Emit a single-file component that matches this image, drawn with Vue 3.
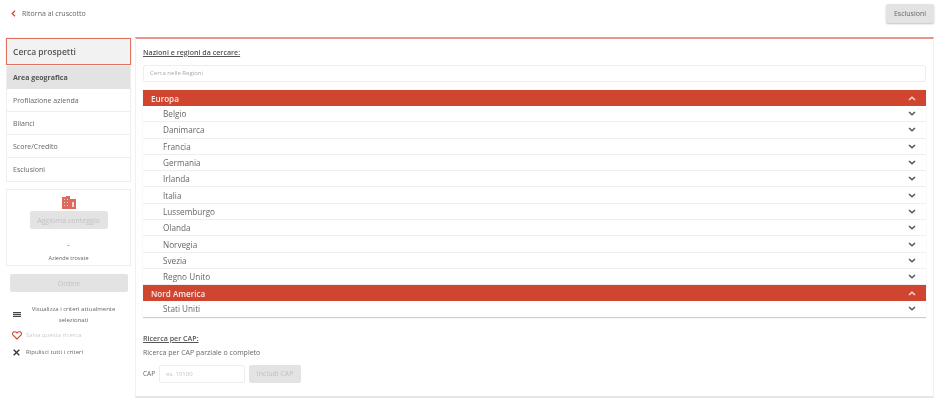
<script setup>
const menu = ['Area geografica', 'Profilazione azienda', 'Bilanci', 'Score/Credito', 'Esclusioni']
const groups = [
  { name: 'Europa', items: ['Belgio', 'Danimarca', 'Francia', 'Germania', 'Irlanda', 'Italia', 'Lussemburgo', 'Olanda', 'Norvegia', 'Svezia', 'Regno Unito'] },
  { name: 'Nord America', items: ['Stati Uniti'] }
]
</script>

<template>
  <div class="page">
    <header class="top">
      <a class="back"><svg width="5" height="7" viewBox="0 0 5 7"><path d="M4 .8 1.2 3.5 4 6.2" fill="none" stroke="#d0452f" stroke-width="1.2"/></svg><span>Ritorna al cruscotto</span></a>
      <button class="excl">Esclusioni</button>
    </header>
    <div class="cols">
      <aside class="side">
        <div class="side-title">Cerca prospetti</div>
        <ul class="menu">
          <li v-for="(m, i) in menu" :key="m" :class="{ active: i === 0 }">{{ m }}</li>
        </ul>
        <div class="count">
          <svg class="bld" width="14" height="13" viewBox="0 0 14 13"><path d="M0 1h4V0h4v3h6v10H0z" fill="#dd6a5c"/><path d="M2 3h1v1H2zM5 3h1v1H5zM2 6h1v1H2zM5 6h1v1H5zM2 9h1v1H2zM5 9h1v1H5zM10 6h2v5h-2z" fill="#f6d5d0"/></svg>
          <button class="ghost upd">Aggiorna conteggio</button>
          <div class="dash">-</div>
          <div class="found">Aziende trovate</div>
        </div>
        <button class="ghost order">Ordine</button>
        <div class="act view">
          <svg width="8" height="5" viewBox="0 0 8 5"><path d="M0 0h8v1.200H0zM0 1.900h8v1.200H0zM0 3.800h8V5H0z" fill="#444"/></svg>
          <span>Visualizza i criteri attualmente selezionati</span>
        </div>
        <div class="act saved">
          <svg width="10" height="9" viewBox="0 0 10 9"><path d="M5 8 1.100 4.200C-.2 2.700.8.8 2.600.8 3.600.8 4.500 1.300 5 2c.5-.7 1.400-1.200 2.400-1.200 1.800 0 2.800 1.900 1.500 3.400z" fill="none" stroke="#d0452f" stroke-width="1.100"/></svg>
          <span>Salva questa ricerca</span>
        </div>
        <div class="act clear">
          <svg width="7" height="7" viewBox="0 0 7 7"><path d="M.7.7l5.600 5.600M6.300.7.700 6.300" stroke="#333" stroke-width="1.300"/></svg>
          <span>Ripulisci tutti i criteri</span>
        </div>
      </aside>
      <main class="panel">
        <h2 class="head">Nazioni e regioni da cercare:</h2>
        <div class="search">Cerca nelle Regioni</div>
        <div class="list">
          <template v-for="g in groups" :key="g.name">
            <div class="grp">
              <span>{{ g.name }}</span>
              <svg width="8" height="5" viewBox="0 0 8 5"><path d="M1 4l3-2.700L7 4" fill="none" stroke="#f8d9d3" stroke-width="1.500"/></svg>
            </div>
            <div v-for="c in g.items" :key="c" class="row">
              <span>{{ c }}</span>
              <svg width="8" height="5" viewBox="0 0 8 5"><path d="M1 1l3 2.700L7 1" fill="none" stroke="#555" stroke-width="1.500"/></svg>
            </div>
          </template>
        </div>
        <h2 class="head cap">Ricerca per CAP:</h2>
        <p class="hint">Ricerca per CAP parziale o completo</p>
        <div class="capline">
          <label>CAP</label>
          <div class="capin">es. 10100</div>
          <button class="ghost inc">Includi CAP</button>
        </div>
      </main>
    </div>
  </div>
</template>

<style scoped>
.page { width: 940px; height: 403px; overflow: hidden; background: #fff; font-family: "Open Sans", sans-serif; color: #555; filter: blur(0.75px); box-sizing: border-box; padding: 4px 6px 0; }
.top { display: flex; justify-content: space-between; align-items: flex-start; height: 34px; }
.back { display: flex; align-items: center; gap: 6px; font-size: 7px; padding: 4px 0 0 5px; height: 10px; color: #666; }
.excl { width: 48px; height: 19px; padding: 0; border: 0; border-radius: 2px; background: #e3e3e3; box-shadow: 0 1px 2px rgba(0,0,0,.25); font: 7px "Open Sans", sans-serif; color: #666; }
.cols { display: flex; gap: 4px; align-items: flex-start; }
.side { width: 125px; flex: none; }
.side-title { height: 27px; margin-bottom: 1px; box-sizing: border-box; border: 1px solid #e0705f; background: #f2f2f2; box-shadow: 0 0 1px rgba(208,69,47,.5); font-size: 8.500px; font-weight: 600; line-height: 25px; padding-left: 6px; color: #555; }
.menu { list-style: none; margin: 0; padding: 0; border: 1px solid #eee; border-top: 0; font-size: 7px; color: #666; }
.menu li { height: 23px; line-height: 21px; padding: 1px 0 0 6px; border-bottom: 1px solid #eee; box-sizing: border-box; }
.menu li:last-child { border-bottom: 0; }
.menu .active { background: #e3e3e3; font-weight: 700; color: #555; border-bottom: 0; }
.count { margin-top: 7px; height: 77px; box-sizing: border-box; border: 1px solid #eee; display: flex; flex-direction: column; align-items: center; padding-top: 6px; }
.ghost { border: 0; padding: 0; border-radius: 2px; background: #e3e3e3; color: #c2c2c2; font-family: "Open Sans", sans-serif; }
.upd { width: 78px; height: 18px; font-size: 7px; margin-top: 2px; }
.dash { margin-top: 9px; font-size: 8px; line-height: 11px; color: #666; }
.found { margin-top: 5px; font-size: 5.500px; line-height: 8px; color: #666; }
.order { display: block; width: 118px; height: 18px; margin: 8px 0 0 4px; font-size: 7px; }
.act { display: flex; align-items: center; font-size: 6px; color: #666; }
.view { margin-top: 12px; padding-left: 7px; gap: 5px; }
.view span { width: 95px; text-align: center; line-height: 10.500px; }
.saved { margin-top: 5px; padding-left: 6px; gap: 4px; color: #ccc; height: 10px; }
.clear { margin-top: 7px; padding-left: 7px; gap: 6px; height: 10px; }
.panel { flex: 1; margin-top: -1px; height: 361px; box-sizing: border-box; border-top: 2px solid #ec9488; border-left: 1px solid #f1f1f1; border-right: 1px solid #f1f1f1; border-bottom: 2px solid #e6e6e6; padding: 0 7px; }
.head { margin: 0; font-size: 7.100px; line-height: 10px; font-weight: 600; text-decoration: underline; color: #555; padding-top: 8px; }
.search { margin-top: 8px; height: 17px; box-sizing: border-box; border: 1px solid #eee; border-radius: 2px; font-size: 6px; line-height: 15px; padding-left: 6px; color: #aaa; }
.list { margin-top: 8px; border-bottom: 1px solid #ccc; box-shadow: 0 0 1px rgba(0,0,0,.15); }
.grp, .row { display: flex; justify-content: space-between; align-items: center; box-sizing: border-box; padding-right: 10px; }
.grp { height: 16px; background: #d04530; color: #fbe9e6; font-size: 8.100px; font-weight: 600; padding-left: 8px; }
.row { height: 16.300px; border-bottom: 1px solid #eee; font-size: 8.200px; color: #666; padding-left: 20px; }
.row:last-child { border-bottom: 0; height: 15.300px; }
.cap { padding-top: 15px; }
.hint { margin: 5px 0 0; font-size: 7px; line-height: 10px; color: #666; }
.capline { display: flex; align-items: center; margin-top: 7px; font-size: 6.500px; color: #666; }
.capin { width: 86px; height: 18px; box-sizing: border-box; margin-left: 4px; border: 1px solid #eee; border-radius: 2px; font-size: 6px; line-height: 16px; padding-left: 6px; color: #c5c5c5; }
.inc { width: 52px; height: 18px; margin-left: 4px; font-size: 7px; }
</style>
